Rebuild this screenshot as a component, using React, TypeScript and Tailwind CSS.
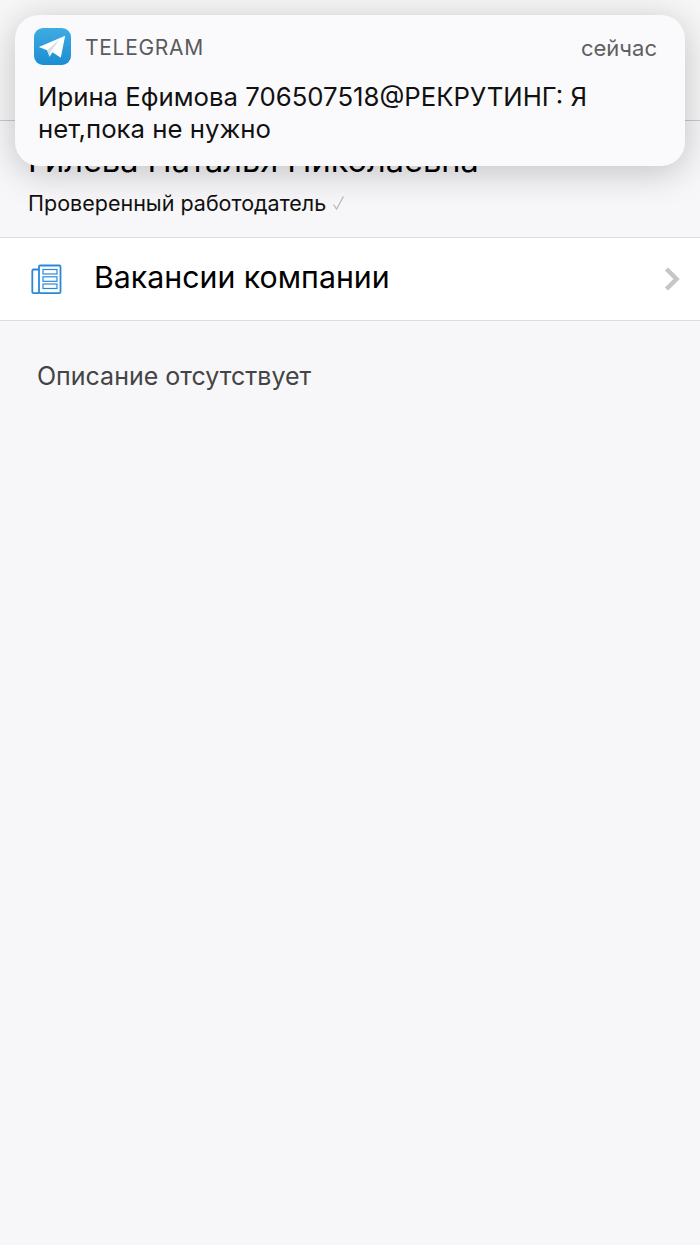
import React from 'react';

const FONT = "font-['Inter','Liberation_Sans',sans-serif]";

// Telegram app badge
const TelegramIcon = () => (
  <svg width="37" height="37" viewBox="0 0 38 38" className="shrink-0 rounded-[9px]">
    <defs>
      <linearGradient id="tg" x1="0" y1="0" x2="0" y2="1">
        <stop offset="0" stopColor="#3fabe3" />
        <stop offset="1" stopColor="#1b8dd2" />
      </linearGradient>
    </defs>
    <rect width="38" height="38" fill="url(#tg)" />
    <path d="M5 19.5 L32 8 L27.5 30.5 L19 25 L16 29.5 L13.5 22.8 Z" fill="#ffffff" />
    <path d="M13.5 22.8 L27 11.5 L17 24 L16 29.5 Z" fill="#cfe0ec" />
  </svg>
);

const VacancyIcon = () => (
  <svg width="31" height="31" viewBox="0 0 31 31" fill="none" stroke="#2a88dc" strokeWidth="1.8">
    <path d="M8 5.5 H2.5 a1.2 1.2 0 0 0 -1.2 1.2 V28 a1.2 1.2 0 0 0 1.2 1.2 H8" />
    <rect x="8" y="1.5" width="21.5" height="27.7" rx="1.2" />
    <rect x="12" y="5.5" width="14" height="4.5" strokeWidth="1.2" />
    <rect x="12" y="12.8" width="14" height="4.5" strokeWidth="1.2" />
    <rect x="12" y="20" width="14" height="4.5" strokeWidth="1.2" />
  </svg>
);

const Chevron = () => (
  <svg width="16" height="24" viewBox="0 0 16 24" fill="none" stroke="#c6c6c8" strokeWidth="4.5">
    <path d="M2.5 2 L12.5 12 L2.5 22" />
  </svg>
);

const CheckMark = () => (
  <svg width="13" height="16" viewBox="0 0 13 16" fill="none" stroke="#b8b8b8" strokeWidth="1.2">
    <path d="M1.5 9.5 L4.5 14 L11.5 1.5" />
  </svg>
);

export default function App() {
  return (
    <div className={`relative h-[1245px] w-[700px] overflow-hidden bg-[#f7f7f9] ${FONT}`}>
      {/* Nav bar, covered by the notification */}
      <div className="h-[121px] border-b border-[#c9c9cb] bg-[#f7f7f8]" />

      {/* Employer header */}
      <div className="px-[28px] pt-[19px]">
        <h1 className="text-[32.5px] leading-[42px] font-normal text-black whitespace-nowrap">
          Гилева Наталья Николаевна
        </h1>
        <p className="mt-[7px] flex items-center gap-[6px] text-[21.5px] leading-[28px] text-[#111]">
          Проверенный работодатель
          <CheckMark />
        </p>
      </div>

      {/* Company vacancies row */}
      <div className="mt-[20px] flex h-[84px] items-center border-y border-[#dcdcde] bg-white pl-[31px] pr-[20px]">
        <VacancyIcon />
        <span className="ml-[32px] flex-1 pb-[3px] text-[30.3px] text-black">Вакансии компании</span>
        <Chevron />
      </div>

      <p className="mt-[39px] pl-[37px] text-[25px] leading-[32px] text-[#444]">Описание отсутствует</p>

      {/* Push notification banner */}
      <div className="absolute left-[15px] top-[15px] h-[151px] w-[670px] rounded-[24px] bg-[#fafafc] shadow-[0_6px_36px_rgba(0,0,0,0.22)]">
        <div className="flex items-center pl-[19px] pr-[28px] pt-[13px]">
          <TelegramIcon />
          <span className="ml-[14px] flex-1 pt-[2px] text-[21px] tracking-[0.7px] text-[#5a5a5c]">TELEGRAM</span>
          <span className="pt-[4px] text-[22px] text-[#5f5f61]">сейчас</span>
        </div>
        <p className="mt-[16px] pl-[23px] pr-[60px] text-[25.75px] leading-[32px] text-[#111]">
          Ирина Ефимова 706507518@РЕКРУТИНГ: Я нет,пока не нужно
        </p>
      </div>
    </div>
  );
}
